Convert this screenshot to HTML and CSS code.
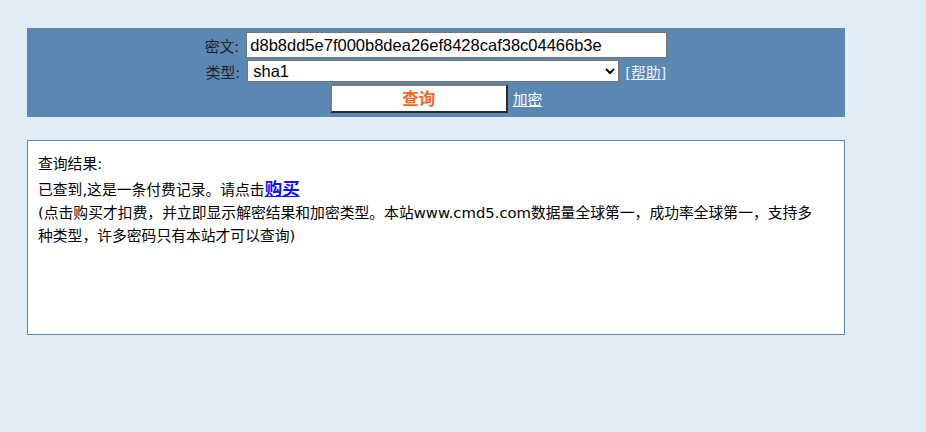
FILE: index.html
```html
<!DOCTYPE html>
<html>
<head>
<meta charset="utf-8">
<link rel="stylesheet" href="styles.css">
</head>
<body>
<div class="wrap">
  <form class="panel">
    <div class="row row-cipher">
      <label class="lbl">密文:</label>
      <input class="txt" type="text" value="d8b8dd5e7f000b8dea26ef8428caf38c04466b3e">
    </div>
    <div class="row row-type">
      <label class="lbl">类型:</label>
      <select class="sel"><option>sha1</option></select>
      <a class="help" href="#">[帮助]</a>
    </div>
    <div class="row row-btn">
      <button class="btn" type="button">查询</button>
      <a class="enc" href="#">加密</a>
    </div>
  </form>
  <div class="result">
    <div class="line l1">查询结果:</div>
    <div class="line l2">已查到,这是一条付费记录。请点击<a class="buy" href="#">购买</a></div>
    <div class="line l3">(点击购买才扣费，并立即显示解密结果和加密类型。本站www.cmd5.com数据量全球第一，成功率全球第一，支持多种类型，许多密码只有本站才可以查询)</div>
  </div>
</div>
</body>
</html>
```
FILE: styles.css
```css
html, body {
  margin: 0;
  padding: 0;
  background: #e0edf6;
  font-family: "DejaVu Sans", "Noto Sans CJK SC", sans-serif;
  font-size: 14.8px;
  color: #000;
}
.wrap {
  padding: 28px 0 0 27px;
  width: 818px;
}
.panel {
  background: #5b88b2;
  height: 89px;
  display: flex;
  flex-direction: column;
  align-items: center;
  gap: 2px;
  padding-top: 4px;
  box-sizing: border-box;
  margin: 0;
}
.row {
  display: flex;
  align-items: center;
}
.row-cipher {
  height: 26px;
  gap: 7px;
}
.row-type {
  height: 22px;
  gap: 7px;
}
.row-btn {
  height: 29px;
  gap: 5px;
}
.lbl {
  color: #222;
}
.txt {
  width: 421px;
  height: 26px;
  box-sizing: border-box;
  border: 1px solid #767676;
  padding: 0 3px;
  font-family: "Liberation Sans", Arial, sans-serif;
  font-size: 16.5px;
  color: #000;
  margin: 0;
  outline: none;
}
.sel {
  width: 372px;
  height: 22px;
  box-sizing: border-box;
  border: 1px solid #767676;
  border-radius: 0;
  background: #fff;
  color: #000;
  font-family: "Liberation Sans", Arial, sans-serif;
  font-size: 16.5px;
  padding: 0 1px;
  margin: 0;
}
.help {
  color: #e8f2ff;
  margin-left: -1px;
}
.btn {
  width: 178px;
  height: 29px;
  box-sizing: border-box;
  background: #fff;
  border: 2px solid;
  border-color: #7a7a7a #2a2a2a #2a2a2a #7a7a7a;
  color: #f5681f;
  font-family: "Noto Sans CJK SC", sans-serif;
  font-weight: bold;
  font-size: 16.5px;
  line-height: 1;
  padding: 0;
  margin: 0;
}
.enc {
  color: #fff;
}
.result {
  margin-top: 23px;
  height: 195px;
  box-sizing: border-box;
  background: #fff;
  border: 1px solid #5b88b2;
  padding: 13px 20px 0 10px;
}
.l1 {
  line-height: 20px;
  margin-bottom: 3px;
}
.l2 {
  height: 24px;
  line-height: 24px;
}
.l3 {
  line-height: 23px;
}
.buy {
  color: #1010ff;
  font-weight: bold;
  font-size: 17.5px;
}
```
